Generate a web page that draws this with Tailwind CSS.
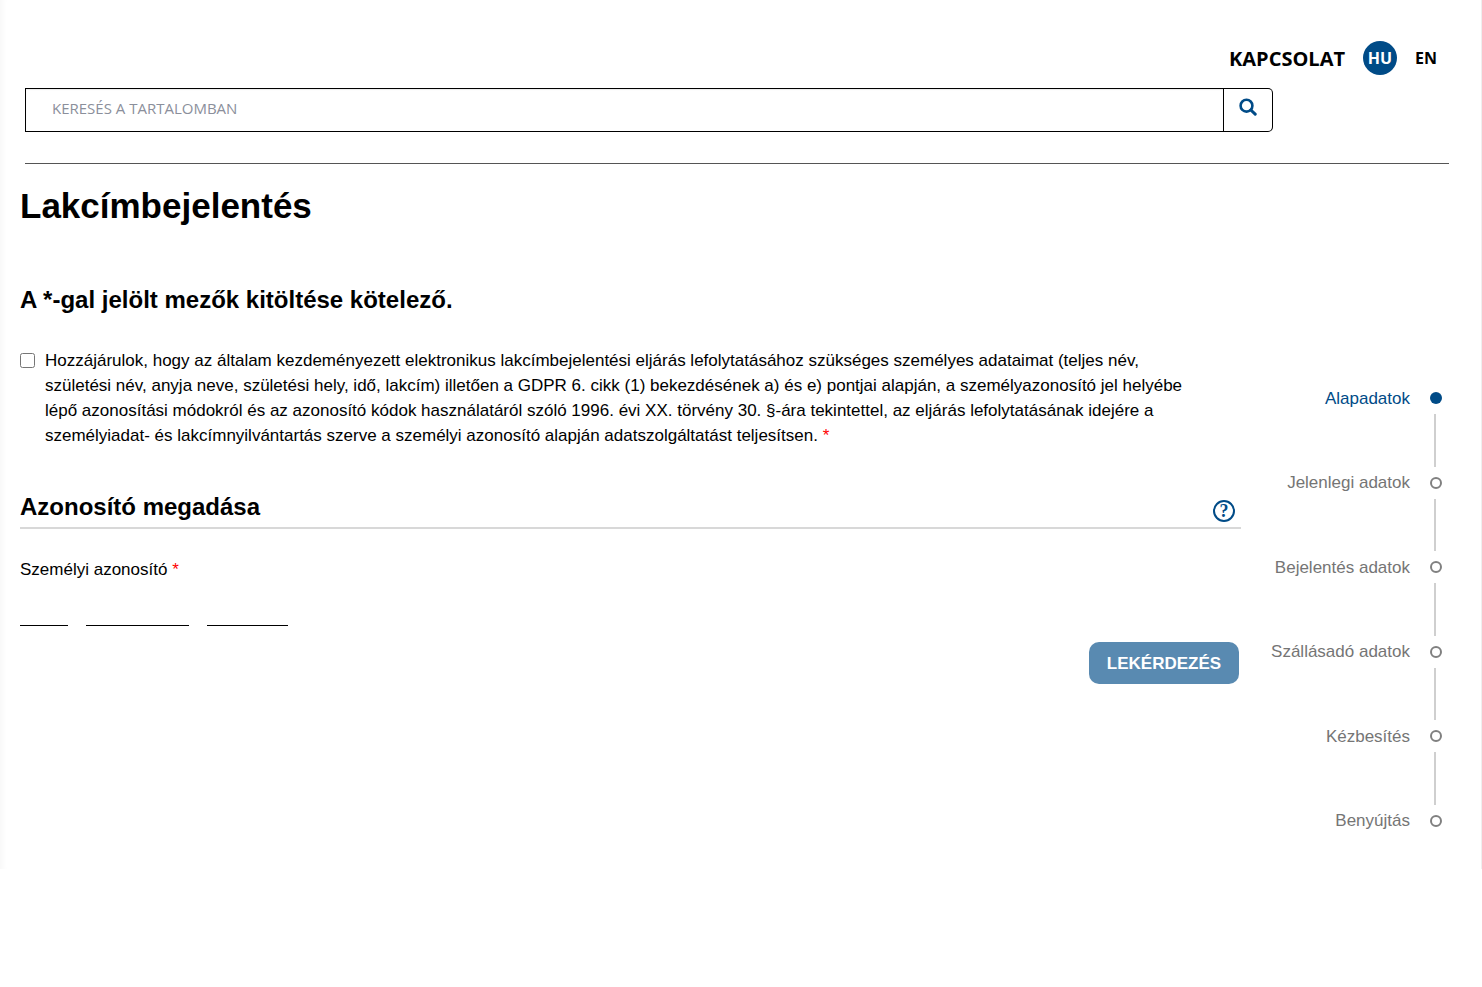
<!DOCTYPE html>
<html lang="hu">
<head>
    <meta charset="UTF-8">
    <meta name="viewport" content="width=device-width, initial-scale=1.0">
    <title>Lakcímbejelentés</title>
    <script src="https://cdn.jsdelivr.net/npm/@tailwindcss/browser@4"></script>
</head>
<body class="bg-white text-black font-['Liberation_Sans',Arial,sans-serif] text-[17px] leading-[25px]">
<div class="border-r border-[#efefef] shadow-[inset_8px_0_8px_-8px_rgba(0,0,0,0.06)] pl-5 pr-8 pb-8">

    <!-- Header -->
    <header class="pl-[5px] pt-[41px] font-['Open_Sans',sans-serif]">
        <nav class="flex items-center justify-end gap-[18px] pr-3 font-bold">
            <a href="#" class="text-[20px]">KAPCSOLAT</a>
            <a href="#" class="flex items-center justify-center size-[34px] rounded-full bg-[#004b87] text-white text-[16px]">HU</a>
            <a href="#" class="text-[16px]">EN</a>
        </nav>

        <!-- Search -->
        <form class="flex h-11 mt-[13px] mr-44">
            <input
                type="text"
                aria-label="Keresés a tartalomban"
                placeholder="KERESÉS A TARTALOMBAN"
                class="flex-1 min-w-0 border border-black pl-[26px] pb-1 text-[15px] placeholder:text-[#8b8f9b] shadow-[inset_0_1px_1px_rgba(0,0,0,0.08)]"
            >
            <button type="button" aria-label="Keresés" class="w-[49px] border border-l-0 border-black rounded-r-[5px] flex justify-center pt-[9px]">
                <svg class="size-[18px]" viewBox="0 0 18 18" fill="none" stroke="#004b87">
                    <circle cx="7.5" cy="7.7" r="5.9" stroke-width="2.6" />
                    <path d="M11.8 12L16.2 16.2" stroke-width="3" stroke-linecap="round" />
                </svg>
            </button>
        </form>
        <hr class="mt-[31px] border-[#555]">
    </header>

    <div class="flex">
        <!-- Form -->
        <main class="flex-1 min-w-0">
            <h1 class="mt-[22px] text-[35px] leading-10 font-bold">Lakcímbejelentés</h1>
            <h2 class="mt-[60px] text-[24px] leading-7 font-bold">A *-gal jelölt mezők kitöltése kötelező.</h2>

            <div class="flex items-start gap-[10px] mt-[34px]">
                <input type="checkbox" id="consent" class="shrink-0 size-[15px] mt-[5px]">
                <label for="consent" class="max-w-[1150px]">Hozzájárulok, hogy az általam kezdeményezett elektronikus lakcímbejelentési eljárás lefolytatásához szükséges személyes adataimat (teljes név, születési név, anyja neve, születési hely, idő, lakcím) illetően a GDPR 6. cikk (1) bekezdésének a) és e) pontjai alapján, a személyazonosító jel helyébe lépő azonosítási módokról és az azonosító kódok használatáról szóló 1996. évi XX. törvény 30. §-ára tekintettel, az eljárás lefolytatásának idejére a személyiadat- és lakcímnyilvántartás szerve a személyi azonosító alapján adatszolgáltatást teljesítsen. <span class="text-[#f00]">*</span></label>
            </div>

            <div class="flex items-center justify-between mt-[45px] pr-[6px] border-b-2 border-[#d8d8d8]">
                <h2 class="pb-[6px] text-[24px] leading-7 font-bold">Azonosító megadása</h2>
                <button type="button" aria-label="Súgó" class="mt-[2px] size-[22px] rounded-full border-2 border-[#004b87] flex items-center justify-center font-['Liberation_Serif',serif] font-bold text-[18px] leading-4 text-[#004b87]">?</button>
            </div>

            <fieldset class="mt-7">
                <legend>Személyi azonosító <span class="text-[#f00]">*</span></legend>
                <div class="flex gap-[18px] mt-5">
                    <input type="text" aria-label="Személyi azonosító, első rész" class="w-12 h-6 border-b border-black">
                    <input type="text" aria-label="Személyi azonosító, második rész" class="w-[103px] h-6 border-b border-black">
                    <input type="text" aria-label="Személyi azonosító, harmadik rész" class="w-[81px] h-6 border-b border-black">
                </div>
            </fieldset>

            <div class="flex justify-end mt-4 pr-[2px]">
                <button type="button" class="h-[42px] w-[150px] rounded-[10px] bg-[#598ab1] text-white font-bold">LEKÉRDEZÉS</button>
            </div>
        </main>

        <!-- Steps -->
        <ol class="w-[208px] shrink-0 h-[455px] mt-[218px] pr-[7px] flex flex-col text-[#757575] whitespace-nowrap">
            <li class="h-8 flex items-center justify-end gap-5 text-[#004b87]">Alapadatok <span class="size-3 rounded-full bg-[#004b87]"></span></li>
            <li aria-hidden="true" class="flex-1 w-[2px] self-end mr-[6px] bg-[#cfcfcf]"></li>
            <li class="h-8 flex items-center justify-end gap-5">Jelenlegi adatok <span class="size-3 rounded-full border-2 border-[#808080]"></span></li>
            <li aria-hidden="true" class="flex-1 w-[2px] self-end mr-[6px] bg-[#cfcfcf]"></li>
            <li class="h-8 flex items-center justify-end gap-5">Bejelentés adatok <span class="size-3 rounded-full border-2 border-[#808080]"></span></li>
            <li aria-hidden="true" class="flex-1 w-[2px] self-end mr-[6px] bg-[#cfcfcf]"></li>
            <li class="h-8 flex items-center justify-end gap-5">Szállásadó adatok <span class="size-3 rounded-full border-2 border-[#808080]"></span></li>
            <li aria-hidden="true" class="flex-1 w-[2px] self-end mr-[6px] bg-[#cfcfcf]"></li>
            <li class="h-8 flex items-center justify-end gap-5">Kézbesítés <span class="size-3 rounded-full border-2 border-[#808080]"></span></li>
            <li aria-hidden="true" class="flex-1 w-[2px] self-end mr-[6px] bg-[#cfcfcf]"></li>
            <li class="h-8 flex items-center justify-end gap-5">Benyújtás <span class="size-3 rounded-full border-2 border-[#808080]"></span></li>
        </ol>
    </div>
</div>
</body>
</html>
